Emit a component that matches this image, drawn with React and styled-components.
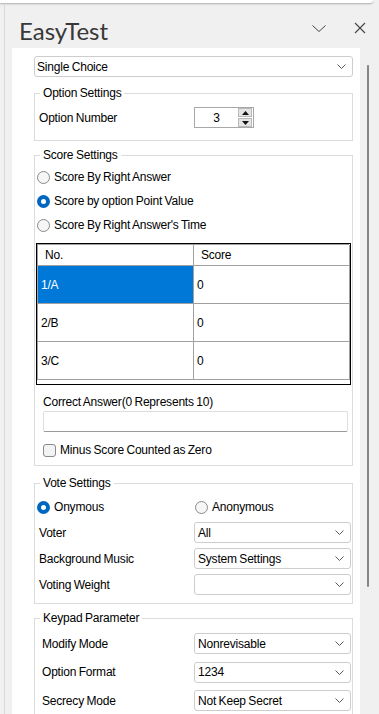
import styled, { createGlobalStyle, css } from 'styled-components'

const GlobalStyle = createGlobalStyle`
  html, body {
    margin: 0;
    padding: 0;
  }
  body {
    background: #f0f0f0;
    font-family: "Liberation Sans", Arial, sans-serif;
    font-size: 12px;
    letter-spacing: -0.2px;
    word-spacing: -0.6px;
    color: #000;
  }
`;

const Page = styled.div`
  width: 379px;
  height: 714px;
  overflow: hidden;
  display: flex;
  flex-direction: column;
  background: #f0f0f0;
`;

const TopStrip = styled.div`
  height: 3px;
  flex-shrink: 0;
  background: #fff;
  margin-right: 6px;
  border-bottom-right-radius: 6px;
  box-shadow: 0 1px 2px rgba(0, 0, 0, 0.28);
`;

const Pane = styled.div`
  flex: 1;
  min-height: 0;
  margin: 2px 0 0 4px;
  border-left: 1px solid #d9d9d9;
  display: flex;
  flex-direction: column;
`;

const Header = styled.header`
  height: 43px;
  flex-shrink: 0;
  display: flex;
  align-items: flex-start;
  padding: 0 7px 0 14px;
`;

const Title = styled.h1`
  flex: 1;
  margin: 12px 0 0;
  font: 400 24px/1.2 Lato, "Open Sans", sans-serif;
  letter-spacing: 0;
  color: #383838;
`;

const IconButton = styled.button`
  width: 24px;
  height: 24px;
  margin-top: 11px;
  padding: 0;
  border: 0;
  background: none;
  display: flex;
  align-items: center;
  justify-content: center;
  & + & {
    margin-left: 17px;
  }
`;

const Body = styled.div`
  flex: 1;
  min-height: 0;
  display: flex;
  padding-left: 7px;
`;

const Panel = styled.main`
  width: 348px;
  flex-shrink: 0;
  box-sizing: border-box;
  background: #fff;
  padding: 8px 7px 0 22px;
  overflow: hidden;
`;

const Track = styled.div`
  flex: 1;
  padding: 17px 0 0 7px;
`;

const Thumb = styled.div`
  width: 2px;
  height: 522px;
  background: #858585;
  border-radius: 1px;
`;

const Dropdown = styled.div`
  height: 21px;
  box-sizing: border-box;
  border: 1px solid #cdcdcd;
  border-radius: 3px;
  background: #fff;
  display: flex;
  align-items: center;
  justify-content: space-between;
  padding: 0 6px 0 ${p => p.$pad ?? 3}px;
  white-space: nowrap;
`;

const Group = styled.fieldset`
  margin: ${p => p.$top}px 0 0;
  padding: 0 1px ${p => p.$bottom}px;
  border: 1px solid #dcdcdc;
  min-width: 0;
`;

const Legend = styled.legend`
  margin-left: 4px;
  padding: 0 3px;
  line-height: 16px;
`;

const FormRow = styled.div`
  display: grid;
  grid-template-columns: 158px 157px;
  align-items: center;
  margin-top: ${p => p.$top ?? 0}px;
  min-height: 21px;
`;

const Label = styled.span`
  padding-left: ${p => p.$indent ?? 3}px;
  white-space: nowrap;
`;

const Spinner = styled.div`
  width: 60px;
  height: 21px;
  box-sizing: border-box;
  border: 1px solid #a8a8a8;
  display: flex;
  align-items: center;
  padding-right: 1px;
`;

const SpinValue = styled.span`
  flex: 1;
  text-align: center;
`;

const SpinButtons = styled.div`
  display: flex;
  flex-direction: column;
  gap: 1px;
`;

const SpinButton = styled.span`
  width: 14px;
  height: 9px;
  box-sizing: border-box;
  background: #e4e4e4;
  border: 1px solid #b9b9b9;
  display: flex;
  align-items: center;
  justify-content: center;
`;

const RadioList = styled.div`
  padding-top: 2px;
`;

const RadioRow = styled.label`
  height: 24px;
  display: flex;
  align-items: center;
  gap: 4px;
  padding-left: 1px;
  white-space: nowrap;
`;

const RadioDot = styled.span`
  width: 13px;
  height: 13px;
  box-sizing: border-box;
  border-radius: 50%;
  flex-shrink: 0;
  ${p =>
    p.$checked
      ? css`
          background: #0067c0;
          display: flex;
          align-items: center;
          justify-content: center;
          &::after {
            content: '';
            width: 5px;
            height: 5px;
            border-radius: 50%;
            background: #fff;
          }
        `
      : css`
          border: 1px solid #8a8a8a;
          background: #f6f6f6;
        `}
`;

const InlineRadio = styled(RadioRow)`
  height: 22px;
`;

const TableFrame = styled.div`
  margin-top: 6px;
  border: 1px solid #000;
  padding: 0 1px 4px 0;
`;

const Grid = styled.div`
  display: grid;
  grid-template-columns: 156px 156px;
  border-top: 1px solid #a0a0a0;
  border-left: 1px solid #a0a0a0;
`;

const Cell = styled.div`
  height: ${p => (p.$head ? 21 : 38)}px;
  box-sizing: border-box;
  border-right: 1px solid #a0a0a0;
  border-bottom: 1px solid #a0a0a0;
  display: flex;
  align-items: center;
  padding-left: ${p => (p.$head ? 7 : 3)}px;
  background: ${p => (p.$selected ? '#0078d7' : '#fff')};
  color: ${p => (p.$selected ? '#fff' : '#000')};
`;

const Caption = styled.div`
  margin-top: 9px;
  padding-left: 7px;
  line-height: 16px;
`;

const TextInput = styled.input`
  display: block;
  width: 305px;
  margin: 1px 0 0 7px;
  height: 21px;
  box-sizing: border-box;
  border: 1px solid #dedede;
  border-bottom-color: #9a9a9a;
  border-radius: 2px;
  padding: 0 3px;
  font: inherit;
  outline: none;
`;

const CheckRow = styled.label`
  margin-top: 10px;
  height: 16px;
  display: flex;
  align-items: center;
  gap: 4px;
  padding-left: 7px;
`;

const CheckBox = styled.span`
  width: 13px;
  height: 13px;
  box-sizing: border-box;
  border: 1px solid #8a8a8a;
  border-radius: 3px;
  background: #f3f3f3;
`;

const SelectRows = styled.div`
  display: flex;
  flex-direction: column;
  gap: ${p => p.$gap}px;
  margin-top: ${p => p.$top}px;
`;

const Chevron = ({ w = 9, h = 5, color = '#5a5a5a' }) => (
  <svg width={w} height={h} viewBox={`0 0 ${w} ${h}`} fill="none">
    <polyline points={`0.5,0.5 ${w / 2},${h - 0.5} ${w - 0.5},0.5`} stroke={color} strokeWidth="1" />
  </svg>
);

const CloseIcon = () => (
  <svg width="12" height="12" viewBox="0 0 12 12" fill="none">
    <path d="M1 1 L11 11 M11 1 L1 11" stroke="#444" strokeWidth="1.1" />
  </svg>
);

const Arrow = ({ up }) => (
  <svg width="7" height="4" viewBox="0 0 7 4">
    <polygon points={up ? '0,4 3.5,0 7,4' : '0,0 3.5,4 7,0'} fill="#111" />
  </svg>
);

const Select = ({ value, pad }) => (
  <Dropdown $pad={pad}>
    <span>{value}</span>
    <Chevron />
  </Dropdown>
);

const rows = [
  { no: '1/A', score: '0', selected: true },
  { no: '2/B', score: '0' },
  { no: '3/C', score: '0' },
];

const voteRows = [
  ['Voter', 'All'],
  ['Background Music', 'System Settings'],
  ['Voting Weight', ''],
];

const keypadRows = [
  ['Modify Mode', 'Nonrevisable'],
  ['Option Format', '1234'],
  ['Secrecy Mode', 'Not Keep Secret'],
];

export default function App() {
  return (
    <>
      <GlobalStyle />
      <Page>
        <TopStrip />
        <Pane>
          <Header>
            <Title>EasyTest</Title>
            <IconButton aria-label="Options">
              <Chevron w={14} h={7} color="#444" />
            </IconButton>
            <IconButton aria-label="Close">
              <CloseIcon />
            </IconButton>
          </Header>
          <Body>
            <Panel>
              <Select value="Single Choice" pad={2} />

              <Group $top={8} $bottom={12}>
                <Legend>Option Settings</Legend>
                <FormRow $top={6}>
                  <Label>Option Number</Label>
                  <Spinner>
                    <SpinValue>3</SpinValue>
                    <SpinButtons>
                      <SpinButton><Arrow up /></SpinButton>
                      <SpinButton><Arrow /></SpinButton>
                    </SpinButtons>
                  </Spinner>
                </FormRow>
              </Group>

              <Group $top={6} $bottom={7}>
                <Legend>Score Settings</Legend>
                <RadioList>
                  <RadioRow><RadioDot />Score By Right Answer</RadioRow>
                  <RadioRow><RadioDot $checked />Score by option Point Value</RadioRow>
                  <RadioRow><RadioDot />Score By Right Answer's Time</RadioRow>
                </RadioList>
                <TableFrame>
                  <Grid>
                    <Cell $head>No.</Cell>
                    <Cell $head>Score</Cell>
                    {rows.map(r => [
                      <Cell key={r.no} $selected={r.selected}>{r.no}</Cell>,
                      <Cell key={r.no + 's'}>{r.score}</Cell>,
                    ])}
                  </Grid>
                </TableFrame>
                <Caption>Correct Answer(0 Represents 10)</Caption>
                <TextInput readOnly defaultValue="" />
                <CheckRow><CheckBox />Minus Score Counted as Zero</CheckRow>
              </Group>

              <Group $top={9} $bottom={8}>
                <Legend>Vote Settings</Legend>
                <FormRow $top={5}>
                  <InlineRadio><RadioDot $checked />Onymous</InlineRadio>
                  <InlineRadio><RadioDot />Anonymous</InlineRadio>
                </FormRow>
                <SelectRows $gap={5} $top={4}>
                  {voteRows.map(([label, value]) => (
                    <FormRow key={label}>
                      <Label>{label}</Label>
                      <Select value={value} />
                    </FormRow>
                  ))}
                </SelectRows>
              </Group>

              <Group $top={6} $bottom={8}>
                <Legend>Keypad Parameter</Legend>
                <SelectRows $gap={7.5} $top={7}>
                  {keypadRows.map(([label, value]) => (
                    <FormRow key={label}>
                      <Label $indent={6}>{label}</Label>
                      <Select value={value} />
                    </FormRow>
                  ))}
                </SelectRows>
              </Group>
            </Panel>
            <Track>
              <Thumb />
            </Track>
          </Body>
        </Pane>
      </Page>
    </>
  );
}
